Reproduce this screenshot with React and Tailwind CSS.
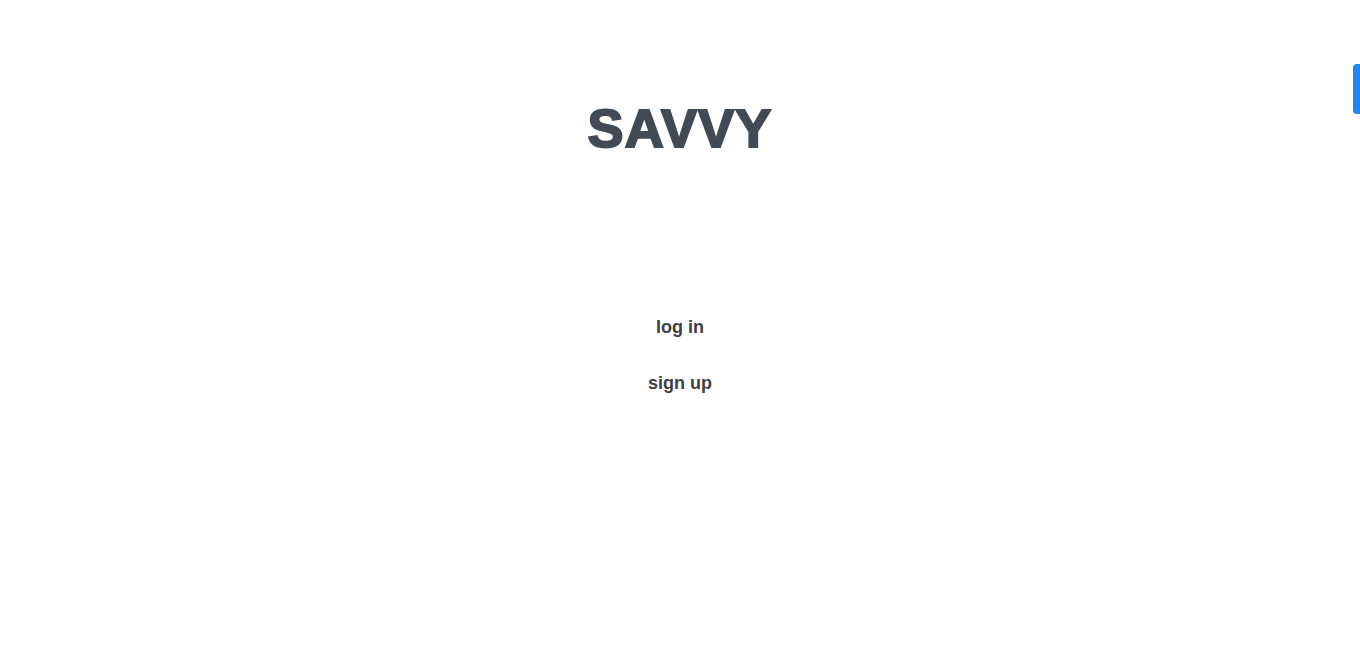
export default function App() {
  return (
    <div className="relative w-full h-[657px] bg-white overflow-hidden" style={{ fontFamily: '"Liberation Sans", Arial, sans-serif' }}>
      <div className="flex flex-col items-center">
        <h1 className="mt-[97px] text-[54px] leading-[62px] font-bold text-[#414b56] tracking-[1.2px] [-webkit-text-stroke:2px_#414b56]">SAVVY</h1>
        <div className="mt-[158px] flex flex-col items-center gap-[35px]">
          <button className="text-[18px] leading-[21px] font-bold text-[#3b4046]">log in</button>
          <button className="text-[18px] leading-[21px] font-bold text-[#3b4046]">sign up</button>
        </div>
      </div>
      <div className="absolute right-0 top-[64px] w-[7px] h-[50px] rounded-l-[4px] bg-[#1a87f5]" />
    </div>
  );
}
